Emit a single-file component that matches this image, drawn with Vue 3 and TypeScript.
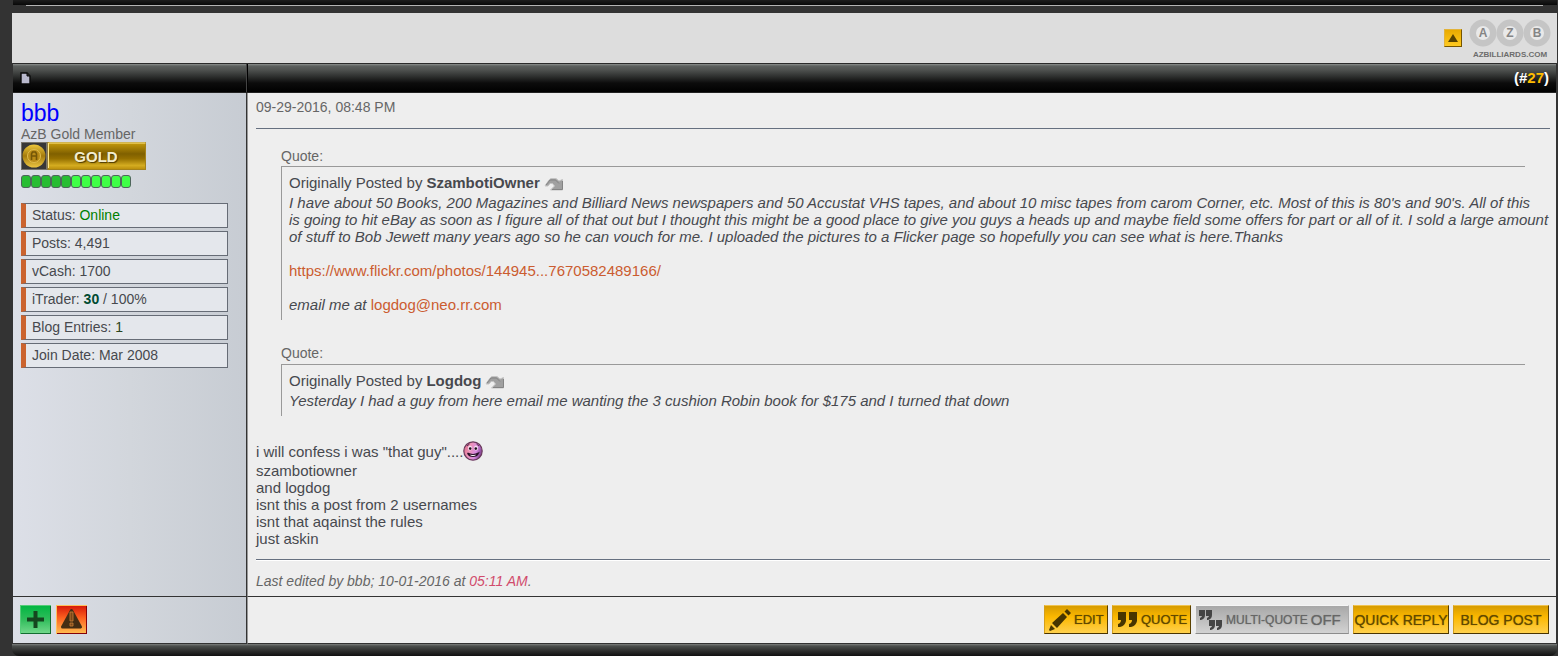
<script setup lang="ts">
interface Paragraph {
  text: string
  link?: string
  href?: string
}
interface Quote {
  author: string
  paragraphs: Paragraph[]
}

const quotes: Quote[] = [
  {
    author: 'SzambotiOwner',
    paragraphs: [
      {
        text: [
          "I have about 50 Books, 200 Magazines and Billiard News newspapers and 50 Accustat VHS tapes, and about 10 misc tapes from carom Corner, etc. Most of this is 80's and 90's. All of this",
          'is going to hit eBay as soon as I figure all of that out but I thought this might be a good place to give you guys a heads up and maybe field some offers for part or all of it. I sold a large amount',
          'of stuff to Bob Jewett many years ago so he can vouch for me. I uploaded the pictures to a Flicker page so hopefully you can see what is here.Thanks',
        ].join('\n'),
      },
      { text: '', link: 'https://www.flickr.com/photos/144945...7670582489166/', href: '#photos' },
      { text: 'email me at ', link: 'logdog@neo.rr.com', href: 'mailto:logdog@neo.rr.com' },
    ],
  },
  {
    author: 'Logdog',
    paragraphs: [
      { text: 'Yesterday I had a guy from here email me wanting the 3 cushion Robin book for $175 and I turned that down' },
    ],
  },
]

const lines: string[] = [
  'szambotiowner',
  'and logdog',
  'isnt this a post from 2 usernames',
  'isnt that aqainst the rules',
  'just askin',
]
</script>

<template>
  <div class="page">
    <div class="cap-top"></div>
    <main class="frame">
      <div class="brand">
        <button class="collapse" type="button" aria-label="Collapse">
          <svg width="16" height="16" viewBox="0 0 16 16"><path d="M3 12 8 4l5 8z" fill="#594300" /></svg>
        </button>
        <svg class="logo" width="82" height="42" viewBox="0 0 82 42">
          <g fill="#c5c5c5">
            <circle cx="14" cy="14" r="13.5" /><circle cx="41" cy="14" r="13.5" /><circle cx="68" cy="14" r="13.5" />
          </g>
          <g fill="#e9e9e9">
            <circle cx="14" cy="14" r="7" /><circle cx="41" cy="14" r="7" /><circle cx="68" cy="14" r="7" />
          </g>
          <g class="ball" text-anchor="middle">
            <text x="14" y="18">A</text><text x="41" y="18">Z</text><text x="68" y="18">B</text>
          </g>
          <text class="domain" x="41" y="38" text-anchor="middle">AZBILLIARDS.COM</text>
        </svg>
      </div>

      <article class="post">
        <header class="bar side-bar">
          <svg width="11" height="13" viewBox="0 0 11 13">
            <path d="M1 1h6l3 3v8H1z" fill="#b9b9cd" stroke="#090909" stroke-width="1.4" />
            <path d="M7 1v3h3" fill="#333" stroke="#090909" />
          </svg>
        </header>
        <header class="bar main-bar">(#<a href="#post27">27</a>)</header>

        <aside class="user">
          <a class="name" href="#bbb">bbb</a>
          <div class="title">AzB Gold Member</div>
          <svg class="medal" width="125" height="28" viewBox="0 0 125 28">
            <defs>
              <linearGradient id="gold" x2="0" y2="1">
                <stop offset="0" stop-color="#c79c0c" /><stop offset=".42" stop-color="#806000" />
                <stop offset=".6" stop-color="#957000" /><stop offset=".85" stop-color="#d4ac20" />
                <stop offset="1" stop-color="#b98d0a" />
              </linearGradient>
              <linearGradient id="coin" x2="0" y2="1">
                <stop offset="0" stop-color="#edc73b" /><stop offset=".5" stop-color="#a47b0c" /><stop offset="1" stop-color="#edc642" />
              </linearGradient>
            </defs>
            <rect width="27" height="28" fill="#77736a" />
            <rect x="1" y="1" width="24" height="26" fill="#373737" />
            <circle cx="13" cy="14" r="11.5" fill="url(#coin)" />
            <circle cx="13" cy="14" r="6.5" fill="#b98b18" stroke="#e0bd4d" />
            <path d="M10.500 18v-6l1-2h3l1 2v6m-5-4h5" fill="none" stroke="#745607" stroke-width="1.6" />
            <rect x="27" y=".5" width="97.500" height="27" fill="url(#gold)" stroke="#a4821b" />
            <path d="M27.500 26V1h97" fill="none" stroke="#ffe888" stroke-width="1" />
            <text x="75" y="20" text-anchor="middle" class="gold-text">GOLD</text>
          </svg>
          <div class="rep"><i v-for="n in 11" :key="n" :class="{ bright: n > 5 }"></i></div>
          <ul class="stats">
            <li>Status: <span class="online">Online</span></li>
            <li>Posts: 4,491</li>
            <li>vCash: 1700</li>
            <li>iTrader: <b>30</b> / 100%</li>
            <li>Blog Entries: <span class="entries">1</span></li>
            <li>Join Date: Mar 2008</li>
          </ul>
        </aside>

        <section class="content">
          <div class="date">09-29-2016, 08:48 PM</div>
          <div class="quote" v-for="q in quotes" :key="q.author">
            <div class="quote-label">Quote:</div>
            <blockquote>
              <div class="by">
                <span>Originally Posted by</span><strong>{{ q.author }}</strong>
                <a href="#quoted" aria-label="View post">
                  <svg width="20" height="14" viewBox="0 0 20 14">
                    <path d="M1 9 5 3l2-1.500h5l3 2.500 3.500-1.500V13h-12l4-4L8.500 6.500 6 6.500 4 9z" fill="#a0a0a0" stroke="#c4c4c4" />
                    <path d="M8 12.500h10.500V4M2 8l4-5h5.500l3.500 3.500" fill="none" stroke="#848484" />
                  </svg>
                </a>
              </div>
              <p v-for="(p, i) in q.paragraphs" :key="i">{{ p.text }}<a v-if="p.link" :href="p.href">{{ p.link }}</a></p>
            </blockquote>
          </div>
          <div class="message">
            <div class="confess">
              i will confess i was "that guy"....<svg width="20" height="20" viewBox="0 0 20 20">
                <defs>
                  <linearGradient id="smile" x1="0" y1="0" x2="1" y2=".3">
                    <stop offset="0" stop-color="#d9657f" /><stop offset=".4" stop-color="#ee93b8" />
                    <stop offset=".75" stop-color="#d88be0" /><stop offset="1" stop-color="#8d4b9c" />
                  </linearGradient>
                </defs>
                <circle cx="10" cy="10" r="9.200" fill="url(#smile)" stroke="#6a3a5c" stroke-width="1.200" />
                <g fill="#f6dff0">
                  <ellipse cx="7" cy="7" rx="2" ry="2.600" /><ellipse cx="13" cy="7" rx="2" ry="2.600" />
                </g>
                <g fill="#22101f">
                  <circle cx="7.200" cy="7.600" r="1.300" /><circle cx="12.800" cy="7.600" r="1.300" />
                </g>
                <path d="M4 5l2.500-2m7 0L16 5" stroke="#5a2a50" fill="none" />
                <path d="M4.500 12q5.500 3 11 0-1.500 3.500-5.500 3.500T4.500 12" fill="#fff" stroke="#2b1028" stroke-width="1.200" />
              </svg>
            </div>
            <div v-for="l in lines" :key="l">{{ l }}</div>
          </div>
          <div class="edited">Last edited by bbb; 10-01-2016 at <span>05:11 AM</span>.</div>
        </section>

        <footer class="user-actions">
          <button class="square online-button" type="button" aria-label="Online">
            <svg width="31" height="29" viewBox="0 0 31 29"><path d="M15.500 6v17M7 14.500h17" stroke="#15461f" stroke-width="4" /></svg>
          </button>
          <button class="square report" type="button" aria-label="Report post">
            <svg width="31" height="29" viewBox="0 0 31 29">
              <path d="M15.500 5.500 24.500 22h-18z" fill="#452d13" stroke="#452d13" stroke-width="3" stroke-linejoin="round" />
              <path d="M14 7h3v9h-3zM14 18h3v3h-3z" fill="#7a4619" stroke="#c98238" stroke-width=".8" />
            </svg>
          </button>
        </footer>

        <footer class="actions">
          <button type="button" class="edit">
            <svg width="24" height="24" viewBox="0 0 24 24" fill="#473500">
              <path d="m3 17 4 4-5 2-1-1zM4 15 15 5l4 4L9 20zM16.500 3.500 19 1l4 4-2.500 2.500z" />
            </svg>EDIT
          </button>
          <button type="button" class="reply-quote">
            <svg width="22" height="17" viewBox="0 0 22 17" fill="#473500">
              <path d="M1 1h8v9q-1 5-6 6H1v-3q3-1 3-4H1zM12 1h8v9q-1 5-6 6h-2v-3q3-1 3-4h-3z" />
            </svg>QUOTE
          </button>
          <button type="button" class="multi">
            <svg width="24" height="20" viewBox="0 0 24 20" fill="#444">
              <path id="comma" d="M0 0h6v5q0 4-4 5H1V8q2-1 2-2H0z" />
              <use href="#comma" x="7" /><use href="#comma" x="10" y="10" /><use href="#comma" x="17" y="10" />
            </svg>MULTI-QUOTE <span>OFF</span>
          </button>
          <button type="button" class="wide">QUICK REPLY</button>
          <button type="button" class="wide">BLOG POST</button>
        </footer>
      </article>
    </main>
    <div class="cap-bottom"></div>
  </div>
</template>

<style>
body { margin: 0; background: #333; }
</style>

<style scoped>
* { box-sizing: border-box; }
.page {
  padding: 0 1px 0 12px;
  font: 15px/17px "Liberation Sans", Arial, sans-serif;
  color: #47494e;
}
a { color: #cb5c30; text-decoration: none; }
button { padding: 0; margin: 0; cursor: pointer; font-family: inherit; }
svg { display: block; flex: none; }

.cap-top {
  height: 13px;
  margin-left: 1px;
  background:
    linear-gradient(#b4b4b4, #b4b4b4) 13px 5px / calc(100% - 27px) 1px no-repeat,
    linear-gradient(#1d1d1d, #111 3px, #080808 5px) 0 0 / 100% 5px no-repeat,
    #333;
}
.brand {
  height: 50px;
  padding: 6px 6px 0 0;
  background: #ddd;
  display: flex;
  justify-content: flex-end;
  gap: 7px;
}
.collapse {
  width: 18px;
  height: 18px;
  margin-top: 10px;
  border: 1px solid;
  border-color: #e2b33a #755500 #755500 #e2b33a;
  background: linear-gradient(#e9aa00, #ffca20);
}
.ball { font: bold 12px "Liberation Sans", sans-serif; fill: #858585; }
.domain { font: bold 8px "Liberation Sans", sans-serif; fill: #6c6c6c; }

.post {
  margin: 0 1px;
  display: grid;
  grid-template-columns: 235px minmax(0, 1fr);
}
.bar {
  height: 30px;
  border-top: 1px solid #2b2b2b;
  border-bottom: 1px solid #222;
  background: linear-gradient(#8c8f8d 0, #5c605e 2px, #4e514f 6px, #303231 12px, #0c0c0c 19px, #000);
  display: flex;
  align-items: center;
}
.side-bar { padding-left: 7px; box-shadow: inset -1px 0 #000, inset -2px 0 #444; }
.main-bar {
  justify-content: flex-end;
  padding-right: 7px;
  color: #fff;
  font: bold 15px/28px "Liberation Sans", sans-serif;
}
.main-bar a { color: #ffbd00; }

.user, .user-actions {
  background: linear-gradient(90deg, #dcdfe7, #d2d6dc 50%, #c7ccd3);
  border-right: 1px solid #999;
  box-shadow: inset -1px 0 #333;
}
.user { padding: 7px 19px 0 8px; }
.name { display: block; font-size: 23px; line-height: 27px; color: #00f; }
.title { font-size: 14px; line-height: 15px; color: #666; }
.gold-text {
  font: bold 15px "Liberation Sans", sans-serif;
  fill: #f3edcf;
  text-shadow: 1px 1px 1px #4c3900;
}
.rep { display: flex; margin: 5px 0 15px; }
.rep i { width: 10px; height: 13px; border: 1px solid #4f645c; border-radius: 3px; background: #27bd32; }
.rep .bright { background: #3fff46; }
.stats { list-style: none; margin: 0; padding: 0; display: grid; gap: 3px; font-size: 14px; }
.stats li {
  height: 25px;
  padding-left: 6px;
  border: 1px solid #666c76;
  border-left: 5px solid #cb632e;
  line-height: 23px;
  background: #e4e7ec;
}
.online { color: #008000; }
.stats b { color: #004b32; }
.entries { color: #294520; }

.content { padding: 5px 6px 5px 8px; background: #eee; }
.date { height: 31px; padding-top: 1px; font-size: 14px; color: #666; border-bottom: 1px solid #667080; }
.quote { margin: 19px 25px 0; }
.quote + .quote { margin-top: 25px; }
.quote-label { height: 18px; font-size: 14px; color: #666; }
.quote + .quote .quote-label { height: 19px; }
blockquote { margin: 0; padding: 7px 0 7px 7px; border: solid #999; border-width: 1px 0 0 1px; }
.by { display: flex; align-items: flex-start; gap: 4px; height: 20px; }
.by svg { margin-top: 3px; }
p { margin: 0 0 17px; font-style: italic; white-space: pre; }
p:last-child { margin: 0; }
p a { font-style: normal; }
.message { margin-top: 24px; padding-bottom: 12px; border-bottom: 1px solid #667080; }
.confess { display: flex; align-items: center; height: 22px; }
.edited { padding-top: 12px; height: 31px; font-size: 14px; font-style: italic; color: #666; border-top: 1px solid #fff; }
.edited span { color: #d14b6c; }

.user-actions, .actions { min-height: 48px; border-top: 1px solid #333; border-bottom: 1px solid #333; padding: 8px 7px; }
.user-actions { display: flex; gap: 5px; }
.square { width: 31px; height: 29px; border: 0; }
.online-button { background: linear-gradient(#00b641, #30bd5b 50%, #75d98d); box-shadow: inset 1px 1px #54cc77, inset -1px -1px #126d30; }
.report { background: linear-gradient(#d51507, #fd6220 45%, #ffc052); box-shadow: inset 1px 1px #ffc05a, inset -1px -1px #850009; }
.actions { display: flex; justify-content: flex-end; gap: 4px; background: #eee; }
.actions button {
  height: 29px;
  border: 1px solid;
  border-color: #f0c34f #594000 #493300 #d59f1b;
  background: linear-gradient(#d69b00, #fbb800 40%, #ffd04d);
  color: #604800;
  font-size: 13px;
  text-shadow: 0 0 1px #806000;
  display: flex;
  align-items: center;
  white-space: nowrap;
}
.actions .edit { width: 64px; padding-left: 3px; gap: 2px; }
.actions .reply-quote { width: 79px; padding-left: 4px; gap: 2px; }
.actions .wide { width: 96px; font-size: 14px; justify-content: center; }
.actions .multi {
  width: 154px;
  padding-left: 3px;
  gap: 3px;
  border-color: #f5f5f5 #aaa #8c8c8c #eee;
  background: linear-gradient(#a8a8a8, #d2d2d2);
  color: #666;
  font-size: 12px;
  text-shadow: 0 0 1px #777;
}
.multi span { font-size: 15px; }
.cap-bottom {
  height: 12px;
  background: linear-gradient(#7d807e, #4c4f4d 2px, #2c2d2c 7px, #101010);
  border-radius: 0 0 7px 7px;
}
</style>
